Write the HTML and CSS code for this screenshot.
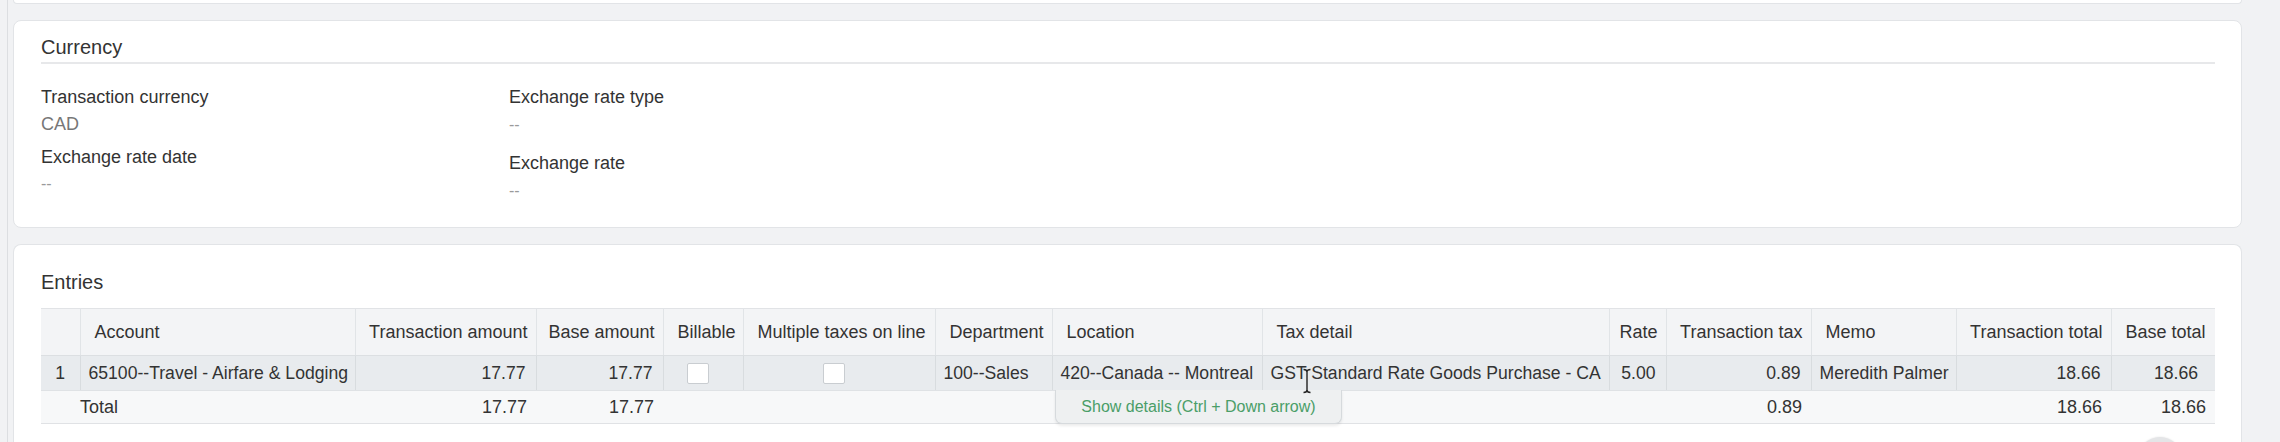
FILE: index.html
```html
<!DOCTYPE html>
<html lang="en">
<head>
<meta charset="utf-8">
<title>Entries</title>
<link rel="stylesheet" href="styles.css">
</head>
<body>
<div class="shell">
  <div class="card stub"></div>

  <section class="card currency">
    <h2 class="section-title ruled">Currency</h2>
    <div class="fields">
      <div class="field-col">
        <div class="field">
          <div class="label">Transaction currency</div>
          <div class="value">CAD</div>
        </div>
        <div class="field">
          <div class="label">Exchange rate date</div>
          <div class="value muted">--</div>
        </div>
      </div>
      <div class="field-col right">
        <div class="field">
          <div class="label">Exchange rate type</div>
          <div class="value muted">--</div>
        </div>
        <div class="field spaced">
          <div class="label">Exchange rate</div>
          <div class="value muted">--</div>
        </div>
      </div>
    </div>
  </section>

  <section class="card entries">
    <h2 class="section-title">Entries</h2>
    <div class="table-wrap">
      <table class="grid">
        <colgroup>
          <col class="c-idx"><col class="c-acct"><col class="c-tamt"><col class="c-bamt"><col class="c-bill"><col class="c-multi"><col class="c-dept"><col class="c-loc"><col class="c-tax"><col class="c-rate"><col class="c-ttax"><col class="c-memo"><col class="c-ttot"><col class="c-btot">
        </colgroup>
        <thead>
          <tr>
            <th></th>
            <th>Account</th>
            <th class="num">Transaction amount</th>
            <th class="num">Base amount</th>
            <th>Billable</th>
            <th>Multiple taxes on line</th>
            <th>Department</th>
            <th>Location</th>
            <th>Tax detail</th>
            <th class="num">Rate</th>
            <th class="num">Transaction tax</th>
            <th>Memo</th>
            <th class="num">Transaction total</th>
            <th>Base total</th>
          </tr>
        </thead>
        <tbody>
          <tr class="row">
            <td class="idx">1</td>
            <td>65100--Travel - Airfare &amp; Lodging</td>
            <td class="num">17.77</td>
            <td class="num">17.77</td>
            <td class="check"><span class="box"></span></td>
            <td class="check"><span class="box"></span></td>
            <td>100--Sales</td>
            <td>420--Canada -- Montreal</td>
            <td>GST Standard Rate Goods Purchase - CA</td>
            <td class="num">5.00</td>
            <td class="num">0.89</td>
            <td>Meredith Palmer</td>
            <td class="num">18.66</td>
            <td class="num wide-pad">18.66</td>
          </tr>
          <tr class="total">
            <td></td>
            <td class="total-label">Total</td>
            <td class="num">17.77</td>
            <td class="num">17.77</td>
            <td></td><td></td><td></td><td></td><td></td><td></td>
            <td class="num">0.89</td>
            <td></td>
            <td class="num">18.66</td>
            <td class="num">18.66</td>
          </tr>
        </tbody>
      </table>
      <div class="tooltip">Show details (Ctrl + Down arrow)</div>
      <svg class="ibeam" width="10" height="26" viewBox="0 0 10 26" aria-hidden="true">
        <path d="M1.5 1.5 Q5 1.5 5 4 Q5 1.5 8.5 1.5 M5 4 V22 M1.5 24.5 Q5 24.5 5 22 Q5 24.5 8.5 24.5" fill="none" stroke="#222" stroke-width="1.4"/>
      </svg>
    </div>
  </section>
</div>
<div class="fab-clip"><div class="fab"></div></div>
</body>
</html>
```

FILE: styles.css
```css
* { box-sizing: border-box; }

html, body {
  margin: 0;
  height: 442px;
  overflow: hidden;
}

body {
  position: relative;
  background: #f1f2f4;
  font-family: "Liberation Sans", Arial, sans-serif;
  color: #333;
}

.shell {
  margin-left: 7px;
  border-left: 1px solid #dcdee1;
  padding-left: 5px;
  width: 2235px;
  height: 442px;
  overflow: hidden;
  display: flex;
  flex-direction: column;
  gap: 16px;
}

.card {
  width: 2229px;
  background: #fff;
  border: 1px solid #e2e4e7;
  border-radius: 8px;
  flex-shrink: 0;
}

.stub {
  height: 4px;
  border-top: none;
  border-radius: 0 0 8px 8px;
}

.section-title {
  margin: 0;
  font-size: 20px;
  line-height: 24px;
  font-weight: normal;
  color: #333;
}

.section-title.ruled {
  padding-bottom: 3px;
  border-bottom: 2px solid #e7e8ea;
}

/* Currency card */
.currency {
  height: 208px;
  padding: 14px 26px 0 27px;
}

.fields {
  margin-top: 22px;
  display: grid;
  grid-template-columns: 468px 1fr;
}

.field-col {
  display: flex;
  flex-direction: column;
  gap: 11px;
}

.field-col.right .field.spaced {
  margin-top: 5px;
}

.field .label {
  font-size: 18px;
  line-height: 22px;
  color: #333;
}

.field .value {
  margin-top: 5px;
  font-size: 18px;
  line-height: 22px;
  color: #777;
}

.field-col.right .field .value {
  margin-top: 6px;
}

.field .value.muted {
  color: #9a9a9a;
  font-size: 16px;
}

/* Entries card */
.entries {
  flex: 1 0 auto;
  border-bottom: none;
  border-radius: 8px 8px 0 0;
  padding: 25px 26px 0 27px;
}

.table-wrap {
  position: relative;
  margin-top: 14px;
  width: 2174px;
}

.grid {
  width: 2174px;
  table-layout: fixed;
  border-collapse: collapse;
  font-size: 18px;
  color: #333;
}

.c-idx { width: 39px; }
.c-acct { width: 275px; }
.c-tamt { width: 181px; }
.c-bamt { width: 127px; }
.c-bill { width: 80px; }
.c-multi { width: 192px; }
.c-dept { width: 117px; }
.c-loc { width: 210px; }
.c-tax { width: 347px; }
.c-rate { width: 57px; }
.c-ttax { width: 145px; }
.c-memo { width: 145px; }
.c-ttot { width: 155px; }
.c-btot { width: 104px; }

.grid th {
  height: 47px;
  background: #f3f4f6;
  border-top: 1px solid #e1e3e6;
  border-right: 1px solid #e1e4e7;
  border-bottom: 1px solid #dcdfe2;
  font-weight: normal;
  text-align: left;
  padding: 0 6px 0 14px;
  white-space: nowrap;
  overflow: hidden;
}

.grid th:last-child { border-right: none; }

.grid th.num {
  text-align: right;
  padding: 0 8px 0 6px;
}

.grid .row td {
  height: 35px;
  background: #e8ebee;
  border-right: 1px solid #d8dcdf;
  border-bottom: 1px solid #dfe2e5;
  padding: 0 8px 0 8px;
  font-size: 17.6px;
  white-space: nowrap;
  overflow: hidden;
}

.grid .row td:last-child { border-right: none; }

.grid td.num {
  text-align: right;
  padding-right: 10px;
}

.grid .row td.idx {
  text-align: center;
  padding: 0;
}

.grid .row td.wide-pad { padding-right: 17px; }

.grid td.check {
  text-align: center;
  padding: 0 10px 0 0;
}

.box {
  display: inline-block;
  width: 22px;
  height: 21px;
  vertical-align: middle;
  background: #fff;
  border: 1px solid #c9cdd1;
  border-radius: 2px;
}

.grid .total td {
  height: 33px;
  background: #f7f8f9;
  border-bottom: 1px solid #e0e2e5;
  padding: 0 8px;
  white-space: nowrap;
}

.grid .total td.num { padding-right: 9px; }

.grid .total td.total-label { padding-left: 0; }

.tooltip {
  position: absolute;
  left: 1014px;
  top: 82px;
  width: 287px;
  height: 34px;
  display: flex;
  align-items: center;
  justify-content: center;
  background: #eef0f1;
  border: 1px solid #d6dadd;
  border-top: none;
  border-radius: 0 0 7px 7px;
  box-shadow: 0 2px 3px rgba(0, 0, 0, 0.08);
  color: #4a9e68;
  font-size: 16px;
}

.ibeam {
  position: absolute;
  left: 1261px;
  top: 60px;
}

.fab-clip {
  position: absolute;
  left: 2134px;
  top: 435px;
  width: 52px;
  height: 7px;
  overflow: hidden;
}

.fab {
  margin: 2px 0 0 4px;
  width: 44px;
  height: 44px;
  border-radius: 50%;
  background: #e4e5e7;
  box-shadow: 0 0 2px rgba(0, 0, 0, 0.12);
}
```
